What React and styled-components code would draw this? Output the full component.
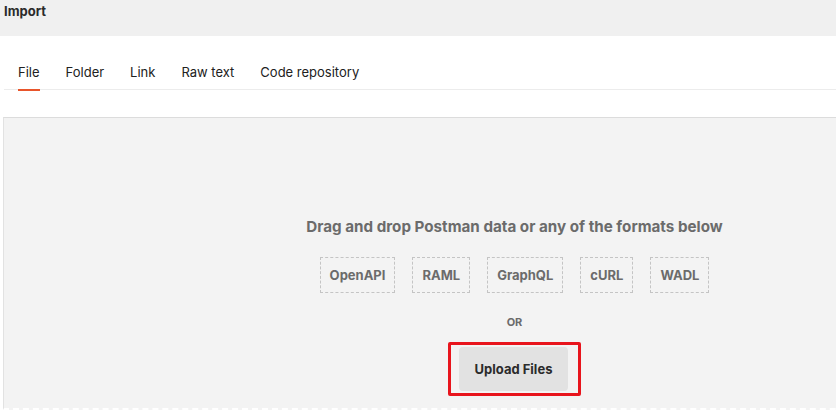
import React, { useState } from "react";
import styled, { createGlobalStyle } from "styled-components";

const GlobalStyle = createGlobalStyle`
  html, body {
    margin: 0;
    padding: 0;
    background: #ffffff;
    overflow: hidden;
  }
  body {
    font-family: Inter, "Noto Sans", Arial, sans-serif;
    color: #212121;
  }
`;

const Page = styled.div`
  width: 836px;
  height: 413px;
  overflow: hidden;
  display: flex;
  flex-direction: column;
`;

const Header = styled.header`
  height: 36px;
  flex-shrink: 0;
  background: #f0f0f0;
  padding: 2px 0 0 4px;
  box-sizing: border-box;
  font-size: 13px;
  font-weight: 700;
  color: #2b2b2b;
  line-height: 18px;
`;

const Body = styled.div`
  padding: 0 0 0 3px;
  display: flex;
  flex-direction: column;
`;

const TabList = styled.nav`
  display: flex;
  gap: 26px;
  padding: 27px 0 0 14px;
  margin-left: 1px;
  border-bottom: 1px solid #ececec;
  height: 54px;
  box-sizing: border-box;
`;

const Tab = styled.button`
  border: none;
  background: none;
  padding: 0 0 9px;
  font-family: inherit;
  font-size: 13px;
  line-height: 17px;
  color: #212121;
  cursor: pointer;
  position: relative;
  height: 27px;
  box-sizing: border-box;

  &::after {
    content: "";
    position: absolute;
    left: 0;
    right: 0;
    bottom: -1px;
    height: 2px;
    background: ${({ $active }) => ($active ? "#e8552b" : "transparent")};
  }
`;

const DropZone = styled.section`
  margin-top: 27px;
  width: 1022px;
  height: 293px;
  box-sizing: border-box;
  background: #f3f3f3;
  border-top: 1px solid #dcdcdc;
  border-left: 1px solid #e2e2e2;
  border-bottom: 2px dashed #ffffff;
  display: flex;
  flex-direction: column;
  align-items: center;
  padding-top: 99px;
`;

const Heading = styled.h2`
  margin: 0;
  font-size: 15.2px;
  line-height: 20px;
  font-weight: 700;
  color: #6b6b6b;
`;

const Formats = styled.div`
  display: flex;
  gap: 17px;
  margin-top: 20px;
`;

const Format = styled.span`
  height: 36px;
  padding: 0 9px;
  display: flex;
  align-items: center;
  border: 1px dashed #c4c4c4;
  font-size: 13px;
  font-weight: 700;
  color: #6b6b6b;
  box-sizing: border-box;
`;

const Or = styled.div`
  margin-top: 22px;
  font-size: 11px;
  font-weight: 700;
  color: #6b6b6b;
  line-height: 14px;
`;

const Highlight = styled.div`
  margin-top: 13px;
  border: 3px solid #e8141c;
  border-radius: 2px;
  padding: 2px 10px 2px 8px;
`;

const UploadButton = styled.button`
  display: block;
  width: 109px;
  height: 44px;
  border: none;
  border-radius: 4px;
  background: #e2e2e2;
  font-family: inherit;
  font-size: 13px;
  font-weight: 700;
  color: #2b2b2b;
  cursor: pointer;
`;

const tabs = ["File", "Folder", "Link", "Raw text", "Code repository"];
const formats = ["OpenAPI", "RAML", "GraphQL", "cURL", "WADL"];

export default function App() {
  const [active, setActive] = useState("File");

  return (
    <Page>
      <GlobalStyle />
      <Header>Import</Header>
      <Body>
        <TabList>
          {tabs.map(tab => (
            <Tab key={tab} $active={tab === active} onClick={() => setActive(tab)}>
              {tab}
            </Tab>
          ))}
        </TabList>
        <DropZone>
          <Heading>Drag and drop Postman data or any of the formats below</Heading>
          <Formats>
            {formats.map(f => (
              <Format key={f}>{f}</Format>
            ))}
          </Formats>
          <Or>OR</Or>
          <Highlight>
            <UploadButton>Upload Files</UploadButton>
          </Highlight>
        </DropZone>
      </Body>
    </Page>
  );
}
